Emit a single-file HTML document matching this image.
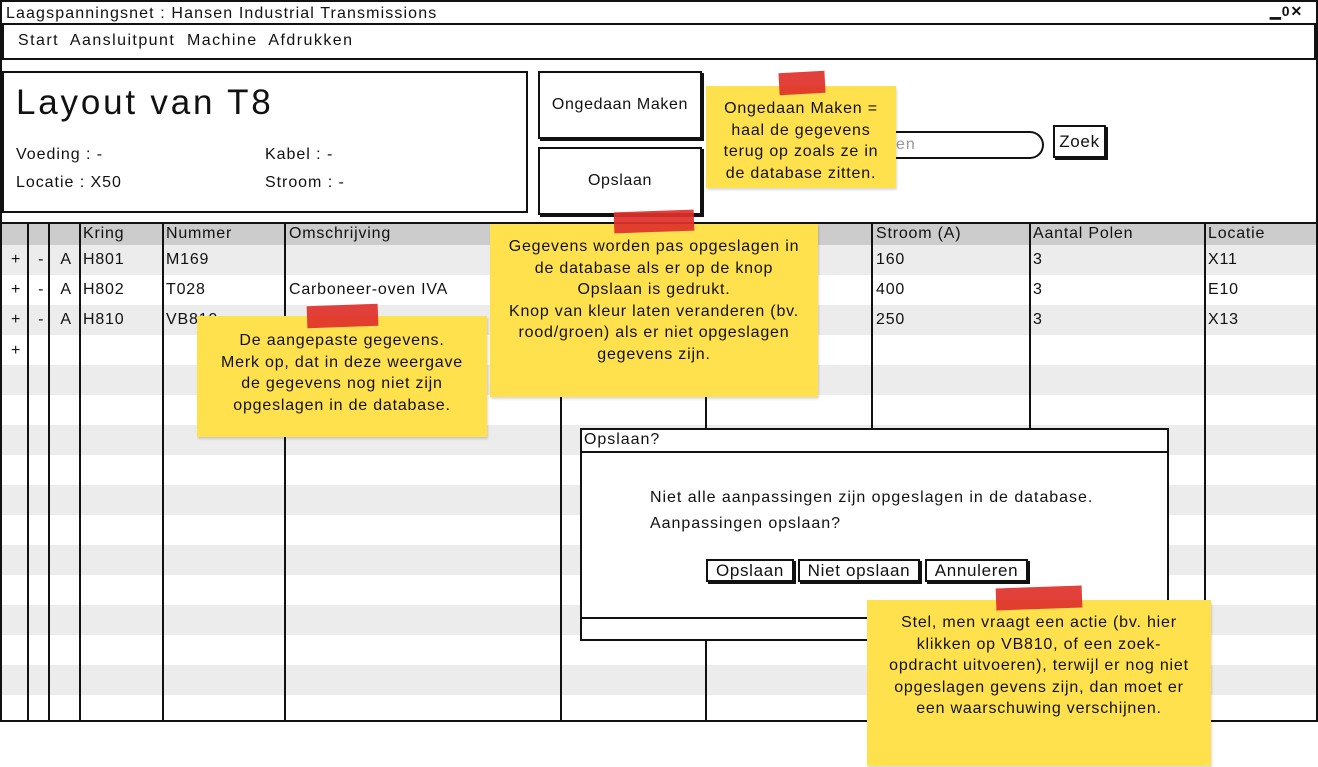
<!DOCTYPE html>
<html><head><meta charset="utf-8"><style>
*{margin:0;padding:0;box-sizing:border-box}
body{width:1318px;height:767px;background:#fff;position:relative;overflow:hidden;font-family:"Liberation Sans",sans-serif;font-size:16px;color:#111;letter-spacing:0.06em}
.a{position:absolute}
.t{position:absolute;white-space:nowrap}
.tb{letter-spacing:0.05em}
.box{position:absolute;border:2px solid #111;background:#fff}
.note{position:absolute;background:#ffe14d;text-align:center;font-size:16px;line-height:21.5px;box-shadow:1px 2px 2px rgba(0,0,0,.15);white-space:nowrap;letter-spacing:0.05em}
.tape{position:absolute;background:#e0302a;opacity:.92}
.vl{position:absolute;top:224px;height:496px;width:2px;background:#111}
.btn{position:absolute;border:2px solid #111;background:#fff;box-shadow:2px 2px 0 #111;text-align:center;letter-spacing:0.04em}
</style></head><body>
<div class="a" style="left:0;top:0;width:1318px;height:722px;border:2px solid #111"></div>
<div class="t" style="left:6px;top:5px;font-size:16px;letter-spacing:0.07em">Laagspanningsnet : Hansen Industrial Transmissions</div>
<div class="t" style="left:1270px;top:3px;font-size:14px;font-weight:bold">▁0✕</div>
<div class="box" style="left:2px;top:23px;width:1314px;height:37px"></div>
<div class="t" style="left:18px;top:32px;font-size:16px;letter-spacing:0.09em">Start&nbsp; Aansluitpunt&nbsp; Machine&nbsp; Afdrukken</div>
<div class="box" style="left:2px;top:71px;width:526px;height:142px"></div>
<div class="t" style="left:16px;top:83px;font-size:35px;letter-spacing:0.08em">Layout van T8</div>
<div class="t" style="left:16px;top:146px">Voeding : -</div>
<div class="t" style="left:265px;top:146px">Kabel : -</div>
<div class="t" style="left:16px;top:174px">Locatie : X50</div>
<div class="t" style="left:265px;top:174px">Stroom : -</div>
<div class="btn" style="left:538px;top:71px;width:164px;height:68px;line-height:64px">Ongedaan Maken</div>
<div class="btn" style="left:538px;top:147px;width:164px;height:68px;line-height:64px">Opslaan</div>
<div class="a" style="left:860px;top:131px;width:184px;height:28px;border:2px solid #111;border-radius:0 14px 14px 0;border-left:none"></div>
<div class="t" style="left:896px;top:136px;color:#999">en</div>
<div class="btn" style="left:1053px;top:125px;width:53px;height:33px;line-height:29px;font-size:17px">Zoek</div>
<div class="a" style="left:0;top:222px;width:1318px;height:500px;border:2px solid #111;background:#fff"></div>
<div class="a" style="left:2px;top:224px;width:1314px;height:21px;background:#ccc"></div>
<div class="a" style="left:2px;top:245px;width:1314px;height:30px;background:#ececec"></div>
<div class="a" style="left:2px;top:305px;width:1314px;height:30px;background:#ececec"></div>
<div class="a" style="left:2px;top:365px;width:1314px;height:30px;background:#ececec"></div>
<div class="a" style="left:2px;top:425px;width:1314px;height:30px;background:#ececec"></div>
<div class="a" style="left:2px;top:485px;width:1314px;height:30px;background:#ececec"></div>
<div class="a" style="left:2px;top:545px;width:1314px;height:30px;background:#ececec"></div>
<div class="a" style="left:2px;top:605px;width:1314px;height:30px;background:#ececec"></div>
<div class="a" style="left:2px;top:665px;width:1314px;height:30px;background:#ececec"></div>
<div class="vl" style="left:27px"></div><div class="vl" style="left:48px"></div><div class="vl" style="left:79px"></div>
<div class="vl" style="left:162px"></div><div class="vl" style="left:284px"></div><div class="vl" style="left:560px"></div>
<div class="vl" style="left:705px"></div><div class="vl" style="left:871px"></div><div class="vl" style="left:1029px"></div><div class="vl" style="left:1204px"></div>
<div class="t tb" style="left:83px;top:225px;font-size:16px">Kring</div>
<div class="t tb" style="left:166px;top:225px;font-size:16px">Nummer</div>
<div class="t tb" style="left:289px;top:225px;font-size:16px">Omschrijving</div>
<div class="t tb" style="left:876px;top:225px;font-size:16px">Stroom (A)</div>
<div class="t tb" style="left:1033px;top:225px;font-size:16px">Aantal Polen</div>
<div class="t tb" style="left:1208px;top:225px;font-size:16px">Locatie</div>
<div class="t" style="left:11px;top:251px;font-size:16px;letter-spacing:0">+&nbsp;&nbsp;&nbsp; -&nbsp;&nbsp;&nbsp; A</div>
<div class="t" style="left:11px;top:281px;font-size:16px;letter-spacing:0">+&nbsp;&nbsp;&nbsp; -&nbsp;&nbsp;&nbsp; A</div>
<div class="t" style="left:11px;top:311px;font-size:16px;letter-spacing:0">+&nbsp;&nbsp;&nbsp; -&nbsp;&nbsp;&nbsp; A</div>
<div class="t" style="left:11px;top:342px;font-size:16px">+</div>
<div class="t tb" style="left:83px;top:251px;font-size:16px">H801</div><div class="t tb" style="left:166px;top:251px;font-size:16px">M169</div>
<div class="t tb" style="left:876px;top:251px;font-size:16px">160</div><div class="t tb" style="left:1033px;top:251px;font-size:16px">3</div><div class="t tb" style="left:1208px;top:251px;font-size:16px">X11</div>
<div class="t tb" style="left:83px;top:281px;font-size:16px">H802</div><div class="t tb" style="left:166px;top:281px;font-size:16px">T028</div><div class="t tb" style="left:289px;top:281px;font-size:16px">Carboneer-oven IVA</div>
<div class="t tb" style="left:876px;top:281px;font-size:16px">400</div><div class="t tb" style="left:1033px;top:281px;font-size:16px">3</div><div class="t tb" style="left:1208px;top:281px;font-size:16px">E10</div>
<div class="t tb" style="left:83px;top:311px;font-size:16px">H810</div><div class="t tb" style="left:166px;top:311px;font-size:16px">VB810</div>
<div class="t tb" style="left:876px;top:311px;font-size:16px">250</div><div class="t tb" style="left:1033px;top:311px;font-size:16px">3</div><div class="t tb" style="left:1208px;top:311px;font-size:16px">X13</div>
<div class="box" style="left:580px;top:428px;width:589px;height:213px"></div>
<div class="a" style="left:580px;top:451px;width:589px;height:2px;background:#111"></div>
<div class="a" style="left:580px;top:617px;width:589px;height:2px;background:#111"></div>
<div class="t" style="left:584px;top:431px">Opslaan?</div>
<div class="t" style="left:650px;top:489px">Niet alle aanpassingen zijn opgeslagen in de database.</div>
<div class="t" style="left:650px;top:515px">Aanpassingen opslaan?</div>
<div class="btn" style="left:706px;top:559px;width:88px;height:23px;line-height:19px;font-size:17px">Opslaan</div>
<div class="btn" style="left:798px;top:559px;width:122px;height:23px;line-height:19px;font-size:17px">Niet opslaan</div>
<div class="btn" style="left:925px;top:559px;width:103px;height:23px;line-height:19px;font-size:17px">Annuleren</div>
<div class="note" style="left:706px;top:86px;width:190px;height:102px;padding-top:12px">Ongedaan Maken =<br>haal de gegevens<br>terug op zoals ze in<br>de database zitten.</div>
<div class="tape" style="left:779px;top:72px;width:46px;height:22px;transform:rotate(-3deg)"></div>
<div class="note" style="left:490px;top:224px;width:328px;height:173px;padding-top:12px">Gegevens worden pas opgeslagen in<br>de database als er op de knop<br>Opslaan is gedrukt.<br>Knop van kleur laten veranderen (bv.<br>rood/groen) als er niet opgeslagen<br>gegevens zijn.</div>
<div class="tape" style="left:614px;top:211px;width:80px;height:21px;transform:rotate(-2deg)"></div>
<div class="note" style="left:197px;top:316px;width:290px;height:121px;padding-top:14px">De aangepaste gegevens.<br>Merk op, dat in deze weergave<br>de gegevens nog niet zijn<br>opgeslagen in de database.</div>
<div class="tape" style="left:307px;top:305px;width:71px;height:22px;transform:rotate(-2deg)"></div>
<div class="note" style="left:867px;top:600px;width:344px;height:166px;padding-top:12px">Stel, men vraagt een actie (bv. hier<br>klikken op VB810, of een zoek-<br>opdracht uitvoeren), terwijl er nog niet<br>opgeslagen gevens zijn, dan moet er<br>een waarschuwing verschijnen.</div>
<div class="tape" style="left:996px;top:587px;width:86px;height:22px;transform:rotate(-2deg)"></div>
</body></html>
